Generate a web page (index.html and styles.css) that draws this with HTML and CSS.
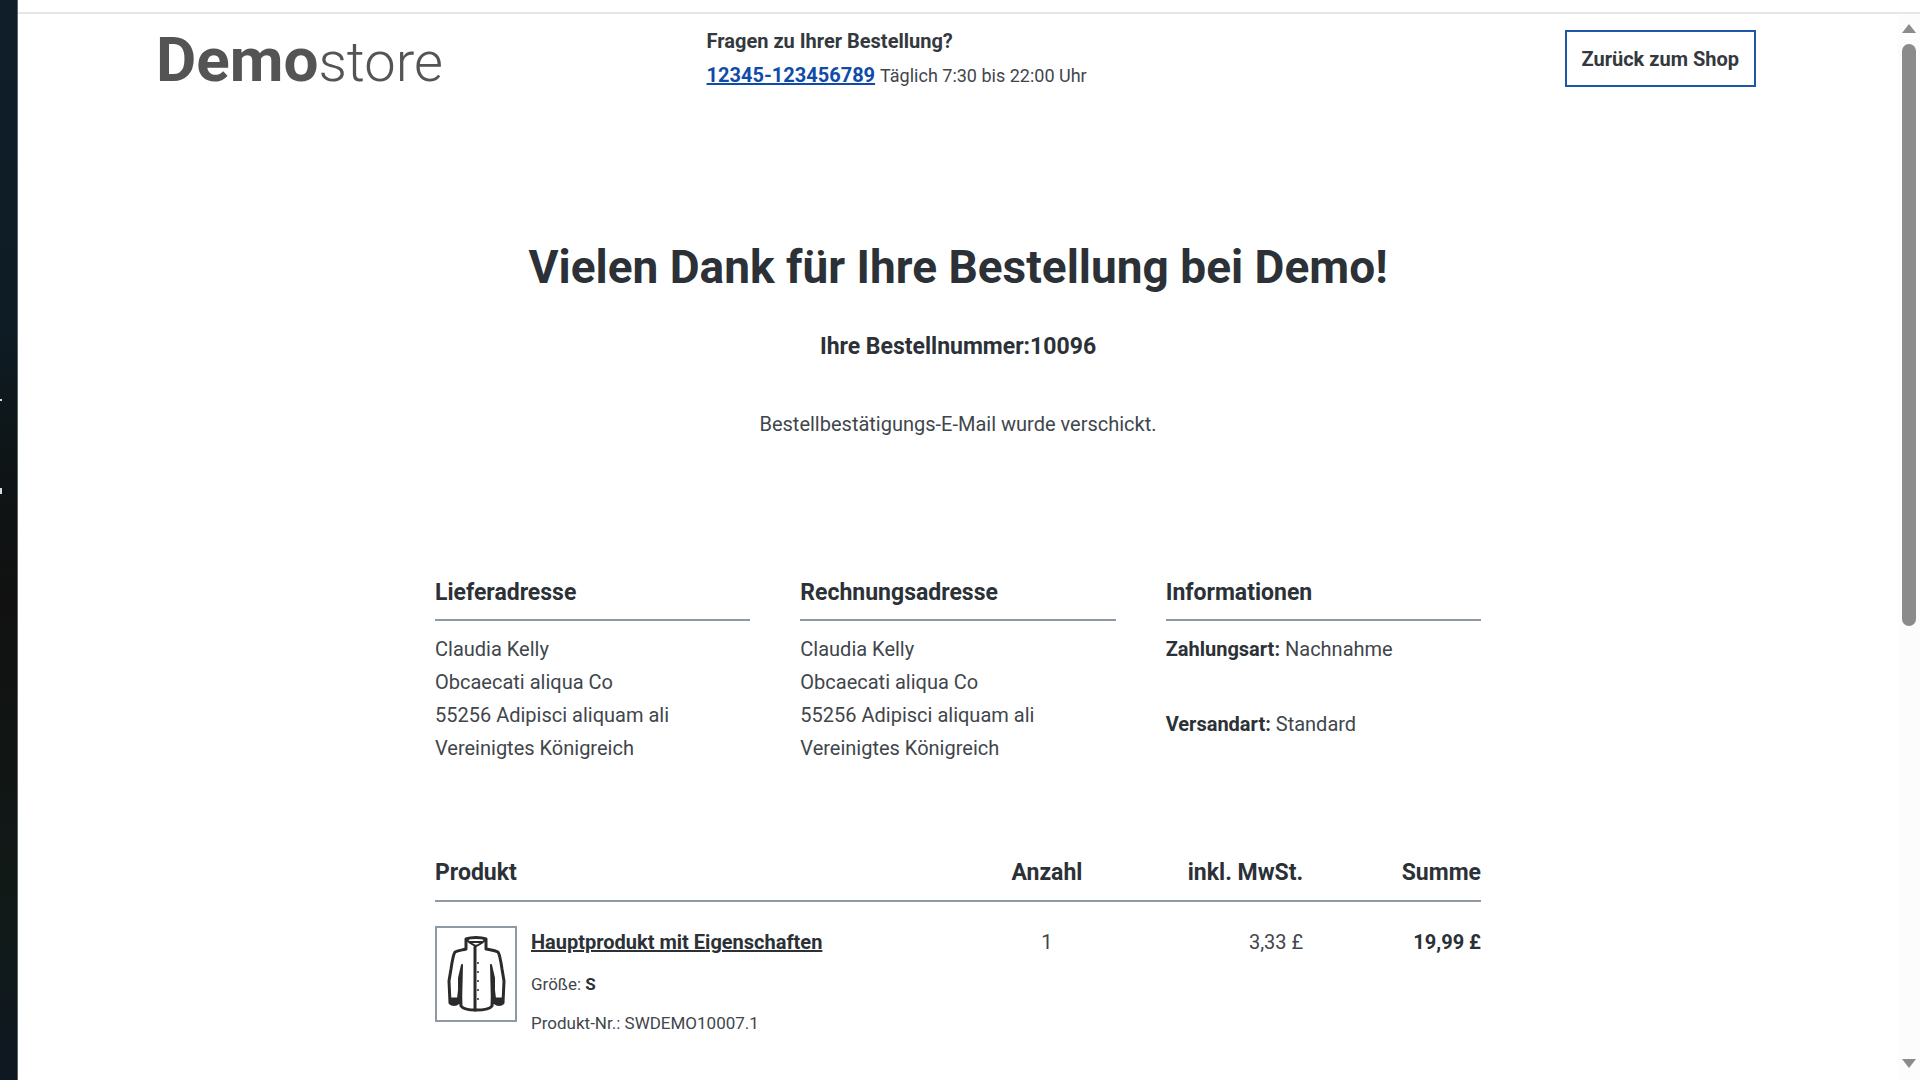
FILE: index.html
```html
<!DOCTYPE html>
<html lang="de">

<head>
  <meta charset="UTF-8">
  <title>Vielen Dank für Ihre Bestellung</title>
  <link rel="stylesheet" href="styles.css">
</head>

<body>
  <div class="desktop">
    <span class="desktop-mark mark-dash"></span>
    <span class="desktop-mark mark-dot"></span>
  </div>
  <div class="window">
    <div class="window-bar"></div>
    <div class="viewport">
      <div class="page">
        <header class="header">
          <a href="#" class="logo"><span class="logo-bold">Demo</span><span class="logo-light">store</span></a>
          <div class="contact">
            <div class="contact-title">Fragen zu Ihrer Bestellung?</div>
            <div><a href="tel:12345-123456789" class="contact-phone">12345-123456789</a> <span class="contact-hours">Täglich 7:30 bis 22:00 Uhr</span></div>
          </div>
          <button type="button" class="back-button">Zurück zum Shop</button>
        </header>

        <main class="main">
          <h1 class="title">Vielen Dank für Ihre Bestellung bei Demo!</h1>
          <p class="order-number">Ihre Bestellnummer:10096</p>
          <p class="mail-info">Bestellbestätigungs-E-Mail wurde verschickt.</p>

          <div class="details">
            <section>
              <h2 class="heading">Lieferadresse</h2>
              <address class="address">
                Claudia Kelly<br>
                Obcaecati aliqua Co<br>
                55256 Adipisci aliquam ali<br>
                Vereinigtes Königreich
              </address>
            </section>
            <section>
              <h2 class="heading">Rechnungsadresse</h2>
              <address class="address">
                Claudia Kelly<br>
                Obcaecati aliqua Co<br>
                55256 Adipisci aliquam ali<br>
                Vereinigtes Königreich
              </address>
            </section>
            <section>
              <h2 class="heading">Informationen</h2>
              <p class="info"><b>Zahlungsart:</b> Nachnahme</p>
              <p class="info"><b>Versandart:</b> Standard</p>
            </section>
          </div>

          <table class="products">
            <thead>
              <tr>
                <th class="col-product">Produkt</th>
                <th class="col-count">Anzahl</th>
                <th class="col-tax">inkl. MwSt.</th>
                <th class="col-sum">Summe</th>
              </tr>
            </thead>
            <tbody>
              <tr>
                <td>
                  <div class="product">
                    <svg class="product-image" viewBox="2 2 78 92" fill="none" stroke="#2b2b2b" stroke-width="3" stroke-linejoin="round" stroke-linecap="round">
                      <path d="M31 13 C36 11 46 11 51 13 L51 23 C55 24 59 24 63 26 C65 29 66 36 67 43 L69 55 L68 77 C66 79 62 79 60 77 L58 60 L57 80 C55 83 48 84 41 84 C34 84 28 83 26 80 L25 60 L23 77 C21 79 17 79 15 77 L14 55 L16 43 C17 36 18 29 20 26 C24 24 28 24 31 23 Z"/>
                      <path d="M32 14 C34 17 37 18 41 20 C45 18 48 17 50 14 M34 16 H48" stroke-width="2"/>
                      <path d="M40 21 V84"/>
                      <path d="M27 39 L24 52 L24 62 L26 80 Z M56 39 L57 80 L59 62 L59 52 Z" fill="#2b2b2b" stroke-width="2"/>
                      <path d="M16 73 H22 M16 76 H22 M61 73 H67 M61 76 H67"/>
                      <path d="M43 37 V74" stroke-width="2" stroke-dasharray="0 9"/>
                    </svg>
                    <div>
                      <a href="#" class="product-name">Hauptprodukt mit Eigenschaften</a>
                      <p class="product-info">Größe: <b>S</b></p>
                      <p class="product-info">Produkt-Nr.: SWDEMO10007.1</p>
                    </div>
                  </div>
                </td>
                <td class="col-count">1</td>
                <td class="col-tax">3,33 £</td>
                <td class="col-sum"><b>19,99 £</b></td>
              </tr>
            </tbody>
          </table>
        </main>
      </div>

      <div class="scrollbar">
        <svg class="scroll-arrow" viewBox="0 0 14 9"><path d="M7 0 L14 9 H0 Z"/></svg>
        <div class="scroll-track">
          <div class="scroll-thumb"></div>
        </div>
        <svg class="scroll-arrow" viewBox="0 0 14 9"><path d="M0 0 H14 L7 9 Z"/></svg>
      </div>
    </div>
  </div>
</body>

</html>
```
FILE: styles.css
```css
* {
  box-sizing: border-box;
}

body {
  display: flex;
  height: 100vh;
  margin: 0;
  overflow: hidden;
  font-family: Roboto, "Liberation Sans", sans-serif;
  font-size: 20px;
  line-height: 33px;
  color: #3f464c;
  background: #fff;
}

h1,
h2,
p {
  margin: 0;
}

b {
  color: #2b3136;
}

.desktop {
  position: relative;
  flex: none;
  width: 18px;
  background: linear-gradient(#101e2a, #0e1c25 30%, #0e1517 42%, #111 55%, #111a18 85%, #0f1722);
  border-right: 1px solid #5d6468;
}

.desktop-mark {
  position: absolute;
  left: 0;
  width: 2px;
  background: #d8dcde;
}

.mark-dash {
  top: 399px;
  height: 2px;
}

.mark-dot {
  top: 488px;
  height: 6px;
}

.window {
  display: flex;
  flex: 1;
  flex-direction: column;
}

.window-bar {
  height: 14px;
  border-bottom: 2px solid #e6e6e6;
}

.viewport {
  display: flex;
  flex: 1;
  min-height: 0;
}

.page {
  flex: 1;
  overflow: hidden;
}

/* header */
.header {
  display: grid;
  grid-template-columns: 12fr 15fr 8fr;
  align-items: center;
  padding: 10px 142px 0 138px;
}

.logo {
  padding-top: 4px;
  color: #545454;
  font-size: 62px;
  line-height: 60px;
  text-decoration: none;
}

.logo-bold {
  font-weight: 700;
}

.logo-light {
  font-size: 56px;
  font-weight: 300;
}

.contact {
  padding-left: 2px;
  line-height: 34px;
}

.contact-title {
  color: #33393e;
  font-weight: 700;
}

.contact-phone {
  color: #0f4ba8;
  font-weight: 700;
}

.contact-hours {
  font-size: 18px;
}

.back-button {
  justify-self: end;
  height: 57px;
  padding: 0 15px;
  border: 2px solid #1f57a8;
  background: #fff;
  color: #33393e;
  font-family: inherit;
  font-size: 20px;
  font-weight: 700;
}

/* confirmation */
.main {
  max-width: 1046px;
  margin: 0 auto;
  padding-top: 146px;
}

.title {
  color: #2b3136;
  font-size: 46px;
  line-height: 56px;
  text-align: center;
}

.order-number {
  margin-top: 35px;
  color: #2b3136;
  font-size: 23px;
  font-weight: 700;
  line-height: 34px;
  text-align: center;
}

.mail-info {
  margin-top: 44px;
  text-align: center;
}

.details {
  display: grid;
  grid-template-columns: repeat(3, 1fr);
  gap: 50px;
  margin-top: 135px;
}

.heading {
  margin-bottom: 12px;
  padding-bottom: 9px;
  border-bottom: 2px solid #8f99a5;
  color: #2b3136;
  font-size: 23px;
  line-height: 34px;
}

.address {
  font-style: normal;
}

.info {
  margin-bottom: 42px;
}

.details .info:last-child {
  margin-bottom: 0;
}

/* products */
.products {
  width: 100%;
  margin-top: 91px;
  border-collapse: collapse;
  table-layout: fixed;
}

.products th {
  padding: 0 0 10px;
  border-bottom: 2px solid #8f99a5;
  color: #2b3136;
  font-size: 23px;
  line-height: 34px;
}

.products td {
  padding: 24px 0 0;
  vertical-align: top;
}

.products .col-product {
  width: 51%;
  text-align: left;
}

.products .col-count {
  width: 15%;
  text-align: center;
}

.products .col-tax {
  width: 17%;
  text-align: right;
}

.products .col-sum {
  width: 17%;
  text-align: right;
}

.product {
  display: flex;
  align-items: flex-start;
  gap: 14px;
}

.product-image {
  flex: none;
  width: 82px;
  height: 96px;
  border: 2px solid #8f99a5;
}

.product-name {
  color: #2b3136;
  font-weight: 700;
}

.product-info {
  margin-top: 12px;
  font-size: 17px;
  line-height: 27px;
}

/* scrollbar */
.scrollbar {
  display: flex;
  flex: none;
  flex-direction: column;
  align-items: center;
  width: 22px;
  padding: 10px 0 12px;
  background: #fcfcfc;
}

.scroll-arrow {
  width: 14px;
  height: 9px;
  fill: #8b8b8b;
}

.scroll-track {
  flex: 1;
  width: 14px;
  padding: 11px 0;
}

.scroll-thumb {
  height: 58%;
  border-radius: 7px;
  background: #8b8b8b;
}
```
